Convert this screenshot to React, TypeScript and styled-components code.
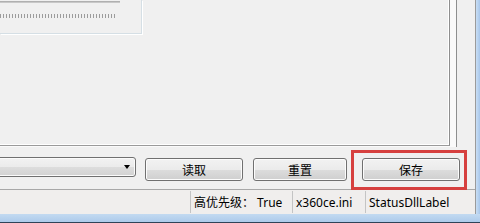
import React from "react";
import styled, { createGlobalStyle } from "styled-components";

const GlobalStyle = createGlobalStyle`
  html, body {
    margin: 0;
    padding: 0;
    background: #f0f0f0;
  }
`;

const Root = styled.div`
  position: relative;
  width: 480px;
  height: 223px;
  overflow: hidden;
  display: flex;
  flex-direction: column;
  background: #f0f0f0;
  font-family: "Noto Sans", "Noto Sans CJK SC", sans-serif;
  font-size: 12px;
  color: #000;
`;

const Main = styled.div`
  display: flex;
  height: 214px;
`;

const Client = styled.div`
  width: 475px;
  border-right: 1px solid #9a9a9a;
  display: flex;
  flex-direction: column;
`;

const RightFrame = styled.div`
  flex: 1;
  background: linear-gradient(to right, #c9def4, #a7c6ea);
`;

const BottomFrame = styled.div`
  height: 9px;
  background: linear-gradient(
    to bottom,
    #c3daf1 0%,
    #aecbeb 85%,
    #2f4358 85%,
    #2f4358 100%
  );
`;

// вкладка со страницей
const Tabs = styled.div`
  width: 450px;
  height: 147px;
  padding-right: 6px;
  border-right: 1px solid #8e8f8f;
  background: #fafafa;
  display: flex;
  flex-direction: column;
`;

const Page = styled.div`
  height: 145px;
  border-right: 1px solid #8e8e8e;
  border-bottom: 1px solid #9a9a9a;
  box-shadow: inset -1px -1px 0 #ffffff;
  background: #f0f0f0;
`;

const GroupBox = styled.div`
  width: 141px;
  height: 33px;
  border-right: 1px solid #d5dfe5;
  border-bottom: 1px solid #d5dfe5;
  box-shadow: 1px 1px 0 #ffffff;
  display: flex;
  flex-direction: column;
`;

const TrackChannel = styled.div`
  width: 120px;
  height: 2px;
  margin-top: 1px;
  background: linear-gradient(to bottom, #a4a4a4, #d4d4d4);
`;

const TrackTicks = styled.div`
  width: 117px;
  height: 4px;
  margin-top: 11px;
  background: repeating-linear-gradient(
    to right,
    #9c9c9c 0px,
    #9c9c9c 1px,
    transparent 1px,
    transparent 3px
  );
`;

const ButtonRow = styled.div`
  height: 42px;
  display: flex;
  align-items: flex-start;
  padding-top: 10px;
  box-sizing: border-box;
`;

const Combo = styled.div`
  width: 140px;
  height: 20px;
  margin-left: -4px;
  box-sizing: border-box;
  border: 1px solid #707070;
  border-radius: 3px;
  background: linear-gradient(
    to bottom,
    #f2f2f2 0%,
    #ebebeb 50%,
    #dddddd 50%,
    #d2d2d2 100%
  );
  box-shadow: inset 0 0 0 1px #fbfbfb;
  display: flex;
  align-items: center;
  justify-content: flex-end;
  padding-right: 5px;
`;

const Arrow = styled.div`
  width: 0;
  height: 0;
  border-left: 3.5px solid transparent;
  border-right: 3.5px solid transparent;
  border-top: 4px solid #000;
`;

const Button = styled.button<{ $w: number; $ml: number }>`
  width: ${(p) => p.$w}px;
  height: 23px;
  margin-top: 1px;
  margin-left: ${(p) => p.$ml}px;
  padding: 0;
  box-sizing: border-box;
  border: 1px solid #707070;
  border-radius: 3px;
  background: linear-gradient(
    to bottom,
    #f2f2f2 0%,
    #ebebeb 50%,
    #dddddd 50%,
    #cfcfcf 100%
  );
  box-shadow: inset 0 0 0 1px #fcfcfc;
  font-family: "Noto Sans CJK SC", "Noto Sans", sans-serif;
  font-size: 12px;
  color: #000;
  line-height: 20px;
`;

const StatusBar = styled.div`
  height: 25px;
  box-sizing: border-box;
  border-top: 1px solid #a8a8a8;
  background: #f0eeed;
  display: flex;
`;

const StatusItem = styled.div<{ $w: number; $sep?: boolean }>`
  width: ${(p) => p.$w}px;
  box-sizing: border-box;
  margin: 1px 0 1px;
  border-left: ${(p) => (p.$sep ? "1px solid #c4c4c4" : "none")};
  padding-left: 3px;
  display: flex;
  align-items: center;
  white-space: nowrap;
`;

const Highlight = styled.div`
  position: absolute;
  left: 351px;
  top: 150px;
  width: 116px;
  height: 40px;
  box-sizing: border-box;
  border: 3px solid #d6403f;
  pointer-events: none;
`;

export default function App() {
  return (
    <Root>
      <GlobalStyle />
      <Main>
        <Client>
          <Tabs>
            <Page>
              <GroupBox>
                <TrackChannel />
                <TrackTicks />
              </GroupBox>
            </Page>
          </Tabs>
          <ButtonRow>
            <Combo>
              <Arrow />
            </Combo>
            <Button $w={98} $ml={9}>读取</Button>
            <Button $w={94} $ml={10}>重置</Button>
            <Button $w={98} $ml={15}>保存</Button>
          </ButtonRow>
          <StatusBar>
            <StatusItem $w={190} />
            <StatusItem $w={102} $sep>高优先级：&nbsp;True</StatusItem>
            <StatusItem $w={73} $sep>x360ce.ini</StatusItem>
            <StatusItem $w={110} $sep>StatusDllLabel</StatusItem>
          </StatusBar>
        </Client>
        <RightFrame />
      </Main>
      <BottomFrame />
      <Highlight />
    </Root>
  );
}
